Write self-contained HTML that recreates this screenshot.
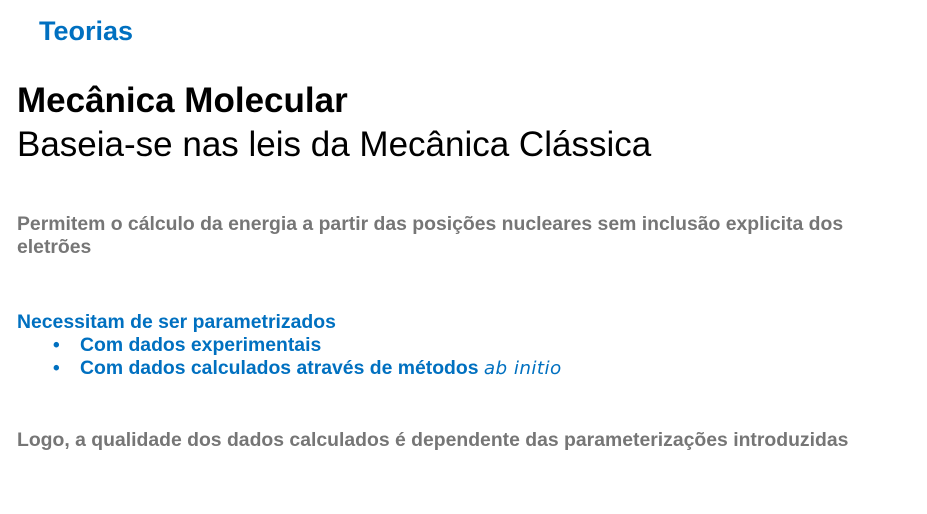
<!DOCTYPE html>
<html><head><meta charset="utf-8"><style>
html,body{margin:0;padding:0;background:#fff;width:927px;height:514px;overflow:hidden;font-family:"Liberation Sans",Arial,sans-serif}
div{position:absolute;white-space:nowrap;transform-origin:0 0}
.g{color:#767676;font-weight:bold;font-size:19px;line-height:23px;left:17px;transform:scaleX(1.02)}
.b{color:#0070C0;font-weight:bold;font-size:19px;line-height:23px}
.s{transform:scaleX(1.02)}
</style></head><body>
<div style="left:39px;top:18px;font-size:27px;line-height:27px;font-weight:bold;color:#0070C0">Teorias</div>
<div style="left:17px;top:83px;font-size:35px;line-height:35px;font-weight:bold;color:#000">Mecânica Molecular</div>
<div style="left:17px;top:127px;font-size:35px;line-height:35px;color:#000">Baseia-se nas leis da Mecânica Clássica</div>
<div class="g" style="top:213px">Permitem o cálculo da energia a partir das posições nucleares sem inclusão explicita dos<br>eletrões</div>
<div class="b s" style="left:17px;top:311px">Necessitam de ser parametrizados</div>
<div class="b" style="left:53px;top:334px">•</div>
<div class="b s" style="left:80px;top:334px">Com dados experimentais</div>
<div class="b" style="left:53px;top:357px">•</div>
<div class="b s" style="left:80px;top:357px">Com dados calculados através de métodos <i style="font-weight:normal;font-family:'DejaVu Sans',sans-serif;font-size:18px;letter-spacing:0.4px">ab initio</i></div>
<div class="g" style="top:429px">Logo, a qualidade dos dados calculados é dependente das parameterizações introduzidas</div>
</body></html>
